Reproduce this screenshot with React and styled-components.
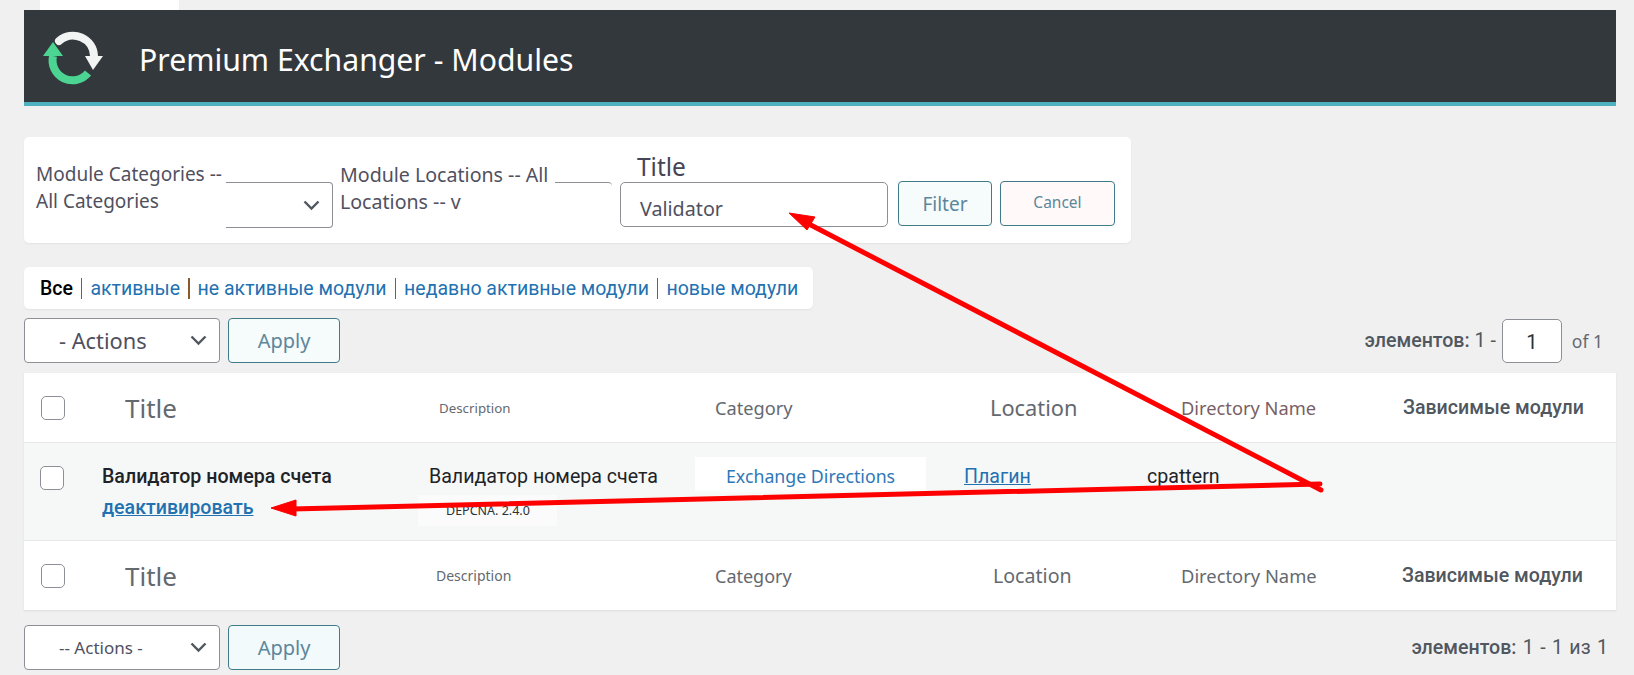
import React from "react";
import styled, { createGlobalStyle } from "styled-components";

const GlobalStyle = createGlobalStyle`
	html, body {
		margin: 0;
		height: 675px;
		overflow: hidden;
		background: #f0f0f1;
		font-family: "Noto Sans", sans-serif;
	}
`;

const Page = styled.div`
	position: relative;
	display: flex;
	flex-direction: column;
	width: 1634px;
	height: 675px;
	box-sizing: border-box;
	padding: 0 18px 0 24px;
`;

const TopTab = styled.div`
	width: 139px;
	height: 10px;
	margin-left: 16px;
	background: #fff;
`;

const Header = styled.header`
	display: flex;
	align-items: center;
	gap: 34px;
	height: 96px;
	box-sizing: border-box;
	padding: 0 0 0 17px;
	background: #33383c;
	border-bottom: 4px solid #4eb1bf;
`;

const HeaderTitle = styled.h1`
	margin: 6px 0 0;
	font-size: 30.2px;
	font-weight: 400;
	color: #fff;
`;

const FilterCard = styled.section`
	display: flex;
	width: 1107px;
	height: 106px;
	box-sizing: border-box;
	margin-top: 31px;
	padding: 17px 0 0 12px;
	background: #fff;
	border-radius: 5px;
	box-shadow: 0 1px 2px rgba(0,0,0,.06);
`;

const OverlapField = styled.div`
	display: grid;
	flex: none;
	width: ${p => p.$width}px;
	margin-right: ${p => p.$after}px;
	padding-top: 7px;
	color: #50505f;
	font-size: ${p => p.$size}px;
	line-height: 27px;
`;

const FieldText = styled.div`
	grid-area: 1 / 1;
	z-index: 1;
	width: ${p => p.$width}px;
`;

const GhostSelect = styled.div`
	grid-area: 1 / 1;
	display: flex;
	align-items: center;
	justify-content: flex-end;
	height: 44px;
	margin: 21px 0 0 ${p => p.$inset}px;
	padding-right: 12px;
	border-top: 1px solid #8c8f94;
	border-right: ${p => (p.$open ? 0 : 1)}px solid #8c8f94;
	border-bottom: ${p => (p.$open ? 0 : 1)}px solid #8c8f94;
	border-radius: 0 4px 4px 0;
`;

const TitleField = styled.div`
	flex: none;
	width: 268px;
	margin-right: 10px;
`;

const TitleLabel = styled.div`
	height: 28px;
	padding-left: 17px;
	color: #454555;
	font-size: 24.5px;
	line-height: 26px;
`;

const TitleInput = styled.div`
	height: 45px;
	box-sizing: border-box;
	padding-left: 19px;
	border: 1px solid #8c8f94;
	border-radius: 5px;
	color: #50505f;
	font-size: 19.7px;
	line-height: 52px;
`;

const FilterButtons = styled.div`
	display: flex;
	gap: 8px;
	padding-top: 27px;
`;

const OutlineButton = styled.div`
	display: flex;
	align-items: center;
	justify-content: center;
	width: ${p => p.$width}px;
	height: 45px;
	box-sizing: border-box;
	padding-bottom: ${p => p.$lift || 0}px;
	border: 1px solid #3f7c88;
	border-radius: 4px;
	background: ${p => p.$tint};
	color: #5c879b;
	font-size: ${p => p.$size}px;
`;

const ViewNav = styled.nav`
	align-self: flex-start;
	display: flex;
	align-items: center;
	gap: 8px;
	height: 42px;
	box-sizing: border-box;
	margin-top: 24px;
	padding: 0 15px 0 16px;
	background: #fff;
	border-radius: 5px;
	box-shadow: 0 1px 2px rgba(0,0,0,.06);
	font-family: Roboto, sans-serif;
	font-size: 19.5px;
`;

const NavCurrent = styled.b`
	color: #000;
	font-weight: 500;
`;

const NavLink = styled.span`
	color: #2271b1;
`;

const NavSeparator = styled.i`
	width: 1.5px;
	height: 21px;
	background: #8a5a2b;
`;

const Toolbar = styled.div`
	display: flex;
	align-items: center;
	gap: 8px;
	height: 45px;
	margin-top: ${p => p.$top}px;
`;

const ActionsSelect = styled.div`
	display: flex;
	align-items: center;
	justify-content: space-between;
	width: 196px;
	height: 45px;
	box-sizing: border-box;
	padding: 0 12px 0 34px;
	background: #fff;
	border: 1px solid #8c8f94;
	border-radius: 4px;
	color: #50505f;
	font-size: ${p => p.$size}px;
`;

const Pagination = styled.div`
	display: flex;
	align-items: center;
	gap: ${p => p.$gap}px;
	margin-left: auto;
	margin-right: ${p => p.$right}px;
	color: #50575e;
	font-family: Roboto, sans-serif;
	font-size: 19.6px;
	word-spacing: ${p => p.$spread || 0}px;

	b {
		font-weight: 500;
	}
`;

const PageInput = styled.div`
	width: 60px;
	height: 44px;
	box-sizing: border-box;
	background: #fff;
	border: 1px solid #8c8f94;
	border-radius: 5px;
	color: #2c3338;
	font-size: 20px;
	line-height: 44px;
	text-align: center;
`;

const PageTotal = styled.span`
	margin-left: 4px;
	font-family: "Noto Sans", sans-serif;
	font-size: 17.5px;
	color: #646970;
`;

const Table = styled.section`
	margin-top: 10px;
	background: #fff;
	box-shadow: 0 1px 2px rgba(0,0,0,.08);
`;

const TableRow = styled.div`
	display: grid;
	grid-template-columns: ${p => p.$cols.map(c => `${c}px`).join(" ")} 1fr;
	align-items: ${p => (p.$body ? "start" : "center")};
	height: ${p => p.$height}px;
	box-sizing: border-box;
	padding: ${p => (p.$body ? "20px" : "0")} 0 0 ${p => p.$pad}px;
	background: ${p => (p.$body ? "#f6f7f7" : "#fff")};
	border-bottom: ${p => (p.$last ? 0 : 1)}px solid #e6e8ea;
`;

const Checkbox = styled.div`
	width: 24px;
	height: 24px;
	box-sizing: border-box;
	margin-top: ${p => (p.$body ? 3 : 0)}px;
	background: #fff;
	border: 1px solid #8c8f94;
	border-radius: 5px;
`;

const HeadCell = styled.div`
	color: ${p => p.$color || "#646970"};
	font-size: ${p => p.$size}px;
`;

const DependsHead = styled.div`
	color: #50575e;
	font-family: Roboto, sans-serif;
	font-size: 19.6px;
	font-weight: 500;
`;

const ModuleName = styled.div`
	margin-top: 1px;
	color: #1d2327;
	font-family: Roboto, sans-serif;
	font-size: 19.6px;
	font-weight: 500;
	line-height: 26px;
`;

const RowLink = styled.a`
	display: block;
	margin-top: ${p => p.$top || 0}px;
	color: #2271b1;
	font-family: Roboto, sans-serif;
	font-size: 19.6px;
	font-weight: ${p => p.$weight || 400};
	line-height: 26px;
	text-decoration: underline;
`;

const BodyText = styled.div`
	margin-top: 1px;
	padding-left: ${p => p.$inset || 0}px;
	color: #1d2327;
	font-family: Roboto, sans-serif;
	font-size: 19.6px;
	line-height: 26px;
	white-space: nowrap;
`;

const VersionPatch = styled.div`
	width: 139px;
	height: 31px;
	box-sizing: border-box;
	margin-top: 5px;
	padding-left: 28px;
	background: #fbfbfc;
	color: #2c3338;
	font-size: 12.5px;
	line-height: 31px;
`;

const CategoryPatch = styled.div`
	width: 231px;
	height: 36px;
	box-sizing: border-box;
	margin-top: -6px;
	padding: 6px 0 0 31px;
	background: linear-gradient(#fff 88%, #f6f7f7);
	color: #2f78b7;
	font-size: 17.75px;
	line-height: 26px;
`;

const ArrowLayer = styled.svg`
	position: absolute;
	top: 0;
	left: 0;
	z-index: 5;
	pointer-events: none;
`;

const Logo = () => (
	<svg width="64" height="64" viewBox="0 0 64 64" fill="none">
		<path d="M18 17 A21 21 0 0 1 53 32" stroke="#f2f3f3" strokeWidth="8" strokeLinecap="round" />
		<path d="M44 32 H62 L52 46 Z" fill="#f2f3f3" />
		<path d="M12 32 A20 20 0 0 0 47 49" stroke="#4cd492" strokeWidth="8" />
		<path d="M2 32 H22 L12 18 Z" fill="#4cd492" />
	</svg>
);

const Chevron = () => (
	<svg width="17" height="11" viewBox="0 0 17 11" fill="none">
		<path d="M1.5 1.5 L8.5 8.5 L15.5 1.5" stroke="#50575e" strokeWidth="2.4" />
	</svg>
);

const Arrows = () => (
	<ArrowLayer width="1634" height="675" viewBox="0 0 1634 675" fill="none">
		<path d="M1321 490 L805 222" stroke="#ff0000" strokeWidth="5" strokeLinecap="round" />
		<path d="M789 213 L815 217 L807 230 Z" fill="#ff0000" stroke="#ff0000" />
		<path d="M1320 484 L292 509" stroke="#ff0000" strokeWidth="5" strokeLinecap="round" />
		<path d="M271 508 L296 500 L296 516 Z" fill="#ff0000" stroke="#ff0000" />
	</ArrowLayer>
);

const navItems = ["активные", "не активные модули", "недавно активные модули", "новые модули"];

const App = () => (
	<Page>
		<GlobalStyle />
		<TopTab />
		<Header>
			<Logo />
			<HeaderTitle>Premium Exchanger - Modules</HeaderTitle>
		</Header>

		<FilterCard>
			<OverlapField $width={297} $after={7} $size={19}>
				<FieldText $width={200}>Module Categories -- All Categories</FieldText>
				<GhostSelect $inset={190}><Chevron /></GhostSelect>
			</OverlapField>
			<OverlapField $width={272} $after={8} $size={19.6}>
				<FieldText $width={225}>Module Locations -- All Locations -- v</FieldText>
				<GhostSelect $inset={215} $open />
			</OverlapField>
			<TitleField>
				<TitleLabel>Title</TitleLabel>
				<TitleInput>Validator</TitleInput>
			</TitleField>
			<FilterButtons>
				<OutlineButton $width={94} $tint="#f6fbfc" $size={19}>Filter</OutlineButton>
				<OutlineButton $width={115} $tint="#fff9f9" $size={15.5} $lift={3}>Cancel</OutlineButton>
			</FilterButtons>
		</FilterCard>

		<ViewNav>
			<NavCurrent>Все</NavCurrent>
			{navItems.map(item => (
				<React.Fragment key={item}>
					<NavSeparator />
					<NavLink>{item}</NavLink>
				</React.Fragment>
			))}
		</ViewNav>

		<Toolbar $top={9}>
			<ActionsSelect $size={21.8}>- Actions <Chevron /></ActionsSelect>
			<OutlineButton $width={112} $tint="#f6fbfc" $size={20}>Apply</OutlineButton>
			<Pagination $gap={6} $right={13}>
				<span><b>элементов:</b> 1 -</span>
				<PageInput>1</PageInput>
				<PageTotal>of 1</PageTotal>
			</Pagination>
		</Toolbar>

		<Table>
			<TableRow $cols={[84, 314, 276, 275, 191, 222]} $pad={17} $height={70}>
				<Checkbox />
				<HeadCell $size={26}>Title</HeadCell>
				<HeadCell $size={13.3}>Description</HeadCell>
				<HeadCell $size={18.2}>Category</HeadCell>
				<HeadCell $size={21.8}>Location</HeadCell>
				<HeadCell $size={18.3} $color="#7a5f66">Directory Name</HeadCell>
				<DependsHead>Зависимые модули</DependsHead>
			</TableRow>
			<TableRow $cols={[62, 316, 277, 269, 183, 256]} $pad={16} $height={98} $body>
				<Checkbox $body />
				<div>
					<ModuleName>Валидатор номера счета</ModuleName>
					<RowLink $top={5} $weight={500}>деактивировать</RowLink>
				</div>
				<div>
					<BodyText $inset={11}>Валидатор номера счета</BodyText>
					<VersionPatch>DEPCNA. 2.4.0</VersionPatch>
				</div>
				<CategoryPatch>Exchange Directions</CategoryPatch>
				<RowLink $top={1}>Плагин</RowLink>
				<BodyText>cpattern</BodyText>
			</TableRow>
			<TableRow $cols={[84, 311, 279, 278, 188, 221]} $pad={17} $height={69} $last>
				<Checkbox />
				<HeadCell $size={26}>Title</HeadCell>
				<HeadCell $size={14}>Description</HeadCell>
				<HeadCell $size={18}>Category</HeadCell>
				<HeadCell $size={19.6}>Location</HeadCell>
				<HeadCell $size={18.35}>Directory Name</HeadCell>
				<DependsHead>Зависимые модули</DependsHead>
			</TableRow>
		</Table>

		<Toolbar $top={15}>
			<ActionsSelect $size={17}>-- Actions - <Chevron /></ActionsSelect>
			<OutlineButton $width={112} $tint="#f3fafb" $size={20}>Apply</OutlineButton>
			<Pagination $gap={5} $right={8} $spread={1.5}>
				<span><b>элементов:</b> 1 - 1 из 1</span>
			</Pagination>
		</Toolbar>

		<Arrows />
	</Page>
);

export default App;
